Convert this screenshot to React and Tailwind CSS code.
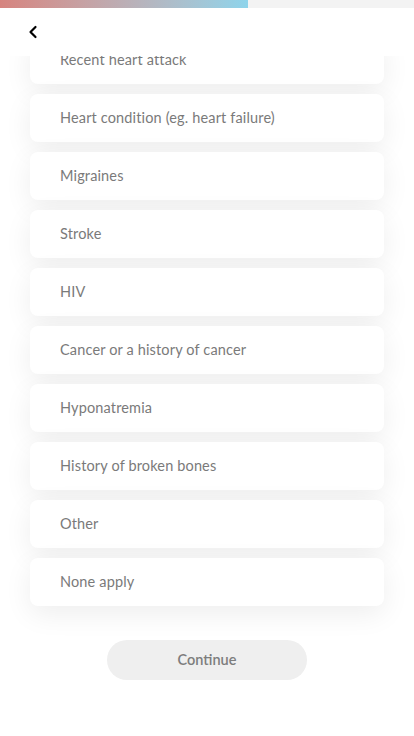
import React from "react";

const conditions = [
  "Recent heart attack",
  "Heart condition (eg. heart failure)",
  "Migraines",
  "Stroke",
  "HIV",
  "Cancer or a history of cancer",
  "Hyponatremia",
  "History of broken bones",
  "Other",
  "None apply",
];

export default function App() {
  return (
    <div className="relative w-[414px] h-[736px] overflow-hidden bg-white" style={{ fontFamily: "Lato, 'Noto Sans', sans-serif" }}>
      {/* Header overlays the scrolled list */}
      <div className="absolute top-0 left-0 right-0 z-10 bg-white h-[56px]">
        <div className="flex h-[8px] bg-[#f3f3f3]">
          <div className="w-[248px] h-full bg-gradient-to-r from-[#d6847f] to-[#8ed4eb]" />
        </div>
        <button className="ml-[26px] mt-[17px] w-[14px] h-[14px] flex items-center justify-center text-black">
          <svg width="10" height="14" viewBox="0 0 10 14" fill="none">
            <path d="M7.5 2 L2.5 7 L7.5 12" stroke="currentColor" strokeWidth="2.2" strokeLinecap="round" strokeLinejoin="round" />
          </svg>
        </button>
      </div>

      <div className="flex flex-col gap-[10px] px-[30px] pt-[36px]">
        {conditions.map((c) => (
          <div
            key={c}
            className="h-[48px] flex items-center pl-[30px] rounded-[8px] bg-white text-[14.5px] tracking-[0.15px] text-[#7a7a7a] shadow-[0_8px_28px_rgba(0,0,0,0.07)]"
          >
            {c}
          </div>
        ))}
      </div>

      <div className="flex justify-center mt-[34px]">
        <button className="w-[200px] h-[40px] rounded-full bg-[#efefef] text-[14.5px] font-semibold text-[#7d7d7d]">
          Continue
        </button>
      </div>
    </div>
  );
}
